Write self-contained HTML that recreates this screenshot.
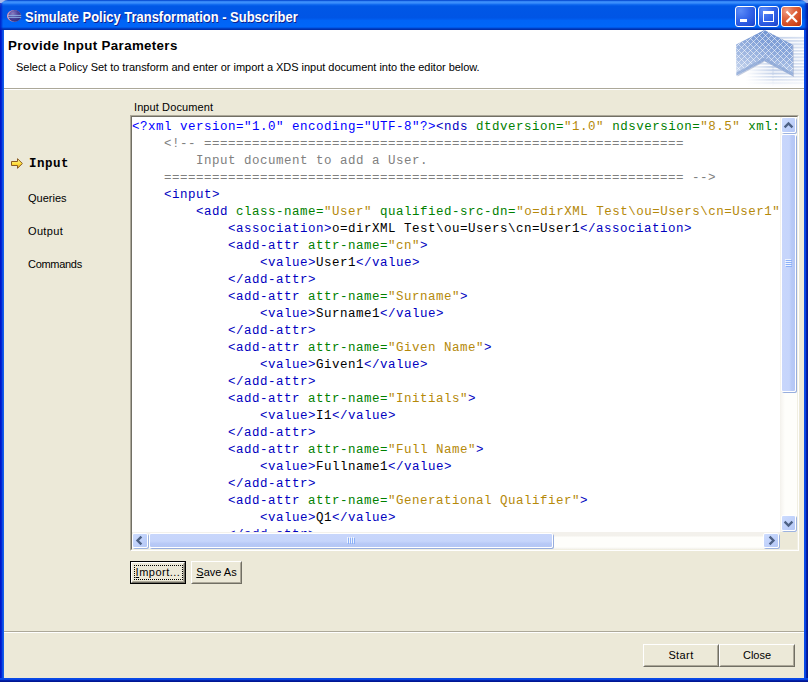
<!DOCTYPE html>
<html><head><meta charset="utf-8"><title>Simulate Policy Transformation - Subscriber</title>
<style>
*{box-sizing:border-box;margin:0;padding:0}
html,body{width:808px;height:682px;overflow:hidden;background:#ece9d8}
body{position:relative;font-family:"Liberation Sans",sans-serif;font-size:11px;color:#000}
.abs{position:absolute}
#corners{left:0;top:0;width:808px;height:8px;background:#a9b9ea}
#titlebar{left:0;top:0;width:808px;height:30px;border-radius:8px 8px 0 0;background:linear-gradient(to bottom,#0846cc 0,#1462e4 1px,#3a8cfa 1.6px,#3d90fc 3px,#1c74f4 4px,#0862ec 5px,#0057e6 6.5px,#0055e5 17.5px,#005aec 19px,#0064f6 20.5px,#0066f8 26.5px,#0058e8 27.5px,#0040c4 28.5px,#0030ac 29.5px,#002a9c 30px)}
#bl{left:0;top:30px;width:4px;height:652px;background:linear-gradient(to right,#0014c4 0,#0019cf 30%,#0a48e2 60%,#1464ee 100%)}
#br{left:804px;top:30px;width:4px;height:652px;background:linear-gradient(to right,#0a4ee8 0,#0842e2 45%,#001ca0 65%,#00138c 100%)}
#bb{left:0;top:678px;width:808px;height:4px;background:linear-gradient(to bottom,#0a4ee8 0,#0842e2 45%,#001ca0 65%,#00138c 100%)}
#title{left:25px;top:9px;font-weight:bold;font-size:14px;line-height:17px;color:#fff;text-shadow:1px 1px 0 #0f1f8c;white-space:nowrap;transform:scaleX(.925);transform-origin:0 0}
.tb{top:6px;width:21px;height:21px;border:1px solid #fff;border-radius:3px;background:radial-gradient(circle at 25% 20%,#5c8cf8 0,#3566ea 45%,#2450d8 80%,#1a3cc0 100%)}
.tb.close{background:radial-gradient(circle at 25% 20%,#f0a088 0,#e06844 35%,#d44a20 70%,#b83010 100%)}
#header{left:4px;top:30px;width:800px;height:58px;background:#fff}
#h1{left:8px;top:38px;font-weight:bold;font-size:13.33px;line-height:15px;white-space:nowrap;letter-spacing:.34px}
#h2{left:16px;top:60px;font-size:11px;line-height:14px;white-space:nowrap;letter-spacing:-.03px}
.sep{left:4px;width:800px;height:2px;border-top:1px solid #aca899;border-bottom:1px solid #fff}
.lbl{font-size:11px;line-height:14px;white-space:nowrap}
#editor{left:130px;top:115px;width:669px;height:436px;border:1px solid;border-color:#aca899 #fff #fff #aca899;background:#fff}
#editor2{left:0;top:0;width:667px;height:434px;border:1px solid;border-color:#716f64 #f1efe2 #f1efe2 #716f64;background:#fff;overflow:hidden}
#code{left:0;top:0;width:648px;height:415px;overflow:hidden;font-family:"Liberation Mono",monospace;font-size:12.5px;letter-spacing:.5px;line-height:17px;white-space:pre;padding:2px 0 0 0}
.p{color:#0000ff}.t{color:#0000c0}.a{color:#008000}.v{color:#b5890a}.c{color:#808080}
.btn{border:1px solid;border-color:#fff #716f64 #716f64 #fff;background:#ece9d8;text-align:center;font-size:11px;white-space:nowrap}
.btn>div{border:1px solid;border-color:#ece9d8 #aca899 #aca899 #ece9d8;width:100%;height:100%;line-height:18px}
u{text-decoration:underline}

.sbtn{border:1px solid #fff;border-radius:2px;background:linear-gradient(135deg,#cddcfe 0%,#c2d3fb 45%,#b4c7f5 100%);box-shadow:1px 1px 0 #9db3df}
.thumb{border:1px solid #fff;border-radius:2px;box-shadow:1px 1px 0 #98aedd}
#vtrack{left:648px;top:0;width:17px;height:415px;background:linear-gradient(to right,#f3f1ec 0,#f8f7f3 2px,#fefefb 5px,#fefefb 100%)}
#htrack{left:0;top:415px;width:648px;height:17px;background:linear-gradient(to bottom,#f3f1ec 0,#f3f1ec 4px,#fefefb 5px,#fefefb 15px,#f3f1ec 17px)}
#corner{left:648px;top:415px;width:17px;height:17px;background:#ece9d8}
</style></head><body>
<div class="abs" id="corners"></div>
<div class="abs" id="titlebar"></div>
<div class="abs" style="left:0;top:3px;width:3px;height:27px;background:linear-gradient(to right,rgba(0,20,190,.85),rgba(0,30,200,.5) 60%,rgba(0,40,210,0))"></div><div class="abs" style="left:804px;top:3px;width:4px;height:27px;background:linear-gradient(to right,rgba(0,30,190,0),rgba(0,24,170,.6) 50%,rgba(0,16,140,.9))"></div><div class="abs" id="bl"></div><div class="abs" id="br"></div><div class="abs" id="bb"></div>
<div class="abs" id="title">Simulate Policy Transformation - Subscriber</div>
<div class="abs tb" style="left:735px"></div>
<div class="abs tb" style="left:758px"></div>
<div class="abs tb close" style="left:781px"></div>
<div class="abs" id="header"></div>

<svg class="abs" style="left:0;top:0" width="808" height="90" viewBox="0 0 808 90">
 <defs>
  <radialGradient id="ecl" cx="0.35" cy="0.3" r="0.8"><stop offset="0" stop-color="#8a7cc0"/><stop offset="0.5" stop-color="#4a429a"/><stop offset="1" stop-color="#2a2a78"/></radialGradient>
  <linearGradient id="chv" x1="0" y1="0" x2="0" y2="1"><stop offset="0" stop-color="#7496d2"/><stop offset="0.6" stop-color="#8eaadc"/><stop offset="1" stop-color="#b4c8e8"/></linearGradient>
  <pattern id="hatch" width="6" height="6" patternUnits="userSpaceOnUse" x="1" y="3"><path d="M-1,-1L7,7M6,-1L-1,6M12,-1L5,6" stroke="#fff" stroke-opacity=".55" stroke-width="1"/></pattern>
  <pattern id="stripes" width="10" height="3.25" patternUnits="userSpaceOnUse" x="0" y="36.8"><rect x="0" y="0" width="10" height="2" fill="#c2d0e9"/></pattern>
  <linearGradient id="fadeL" x1="0" y1="0" x2="1" y2="0"><stop offset="0" stop-color="#fff" stop-opacity="1"/><stop offset="1" stop-color="#fff" stop-opacity="0"/></linearGradient>
  <linearGradient id="fadeR" x1="0" y1="0" x2="1" y2="0"><stop offset="0" stop-color="#fff" stop-opacity="0"/><stop offset="1" stop-color="#fff" stop-opacity=".4"/></linearGradient>
  <linearGradient id="chl" x1="1" y1="0" x2="0" y2="1"><stop offset="0.35" stop-color="#fff" stop-opacity="0"/><stop offset="1" stop-color="#fff" stop-opacity=".38"/></linearGradient>
  <linearGradient id="fadeB" x1="0" y1="0" x2="0" y2="1"><stop offset="0" stop-color="#fff" stop-opacity="0"/><stop offset="1" stop-color="#fff" stop-opacity="1"/></linearGradient>
 </defs>
 <!-- eclipse icon -->
 <ellipse cx="14" cy="15.9" rx="7" ry="5.9" fill="#e8a0b8"/>
 <ellipse cx="14.7" cy="15.9" rx="6.4" ry="5.9" fill="url(#ecl)"/>
 <rect x="8" y="14.9" width="13.2" height=".9" fill="#8fb6e6"/>
 <rect x="8" y="16.9" width="13.2" height=".9" fill="#8fb6e6"/>
 <!-- min / max / close glyphs -->
 <rect x="740" y="19" width="7" height="3" fill="#fff"/>
 <path d="M763,11h11v11h-11z M764,14v7h9v-7z" fill="#fff" fill-rule="evenodd"/>
 <path d="M786.5,11.5L797,22M797,11.5L786.5,22" stroke="#fff" stroke-width="2.2" fill="none"/>
 <!-- header graphic -->
 <g>
  <rect x="772" y="36" width="32" height="51" fill="url(#stripes)"/>
  <rect x="746" y="62" width="28" height="25" fill="url(#stripes)"/>
  <rect x="746" y="62" width="28" height="25" fill="url(#fadeL)"/>
  <rect x="746" y="75" width="58" height="12" fill="url(#fadeB)"/>
  <rect x="772" y="36" width="32" height="51" fill="url(#fadeR)"/>
  <polygon points="764.3,30 793.6,45 794,77 764.8,61.6 737.5,76.5 737,45" fill="#8c9cc0" opacity=".5"/>
  <polygon points="764.3,30 792.6,44.8 793,76 764.3,60.8 736.5,75.6 736.2,44.4" fill="url(#chv)"/>
  <polygon points="764.3,30 792.6,44.8 793,76 764.3,60.8 736.5,75.6 736.2,44.4" fill="url(#hatch)"/>
  <polygon points="764.3,30 792.6,44.8 793,76 764.3,60.8 736.5,75.6 736.2,44.4" fill="url(#chl)"/>
  <polygon points="736.4,72.4 764.3,57.6 793,72.8 793,76 764.3,60.8 736.5,75.6" fill="#8ba6d4" opacity=".75"/>
 </g>
</svg>
<svg class="abs" style="left:10px;top:157px" width="14" height="13" viewBox="0 0 14 13">
 <defs><linearGradient id="arw" x1="0" y1="0" x2="0" y2="1"><stop offset="0" stop-color="#fff8b0"/><stop offset=".5" stop-color="#ffe040"/><stop offset="1" stop-color="#e8a818"/></linearGradient></defs>
 <path d="M1.5,4.5H7.5V1.7L12.4,6.5L7.5,11.3V8.5H1.5Z" fill="url(#arw)" stroke="#8a5a20" stroke-width="1" stroke-linejoin="round"/>
</svg>
<div class="abs" id="h1">Provide Input Parameters</div>
<div class="abs" id="h2">Select a Policy Set to transform and enter or import a XDS input document into the editor below.</div>
<div class="abs sep" style="top:88px"></div>
<div class="abs lbl" id="l_doc" style="left:134px;top:100px;letter-spacing:.1px">Input Document</div>
<div class="abs lbl" id="l_input" style="left:29px;top:157px;font-family:'Liberation Mono',monospace;font-weight:bold;font-size:12.5px;letter-spacing:.5px">Input</div>
<div class="abs lbl" id="l_q" style="left:28px;top:191px">Queries</div>
<div class="abs lbl" id="l_o" style="left:28px;top:224px;letter-spacing:.35px">Output</div>
<div class="abs lbl" id="l_c" style="left:28px;top:257px;letter-spacing:-.3px">Commands</div>
<div class="abs" id="editor"><div class="abs" id="editor2">
<div class="abs" id="code"><span class="p">&lt;?xml version="1.0" encoding="UTF-8"?&gt;</span><span class="t">&lt;nds</span> <span class="a">dtdversion=</span><span class="v">"1.0"</span> <span class="a">ndsversion=</span><span class="v">"8.5"</span> <span class="a">xml:lang=</span><span class="v">"en"</span><span class="t">&gt;</span>
<span class="c">    &lt;!-- ============================================================</span>
<span class="c">        Input document to add a User.</span>
<span class="c">    ================================================================= --&gt;</span>
    <span class="t">&lt;input&gt;</span>
        <span class="t">&lt;add</span> <span class="a">class-name=</span><span class="v">"User"</span> <span class="a">qualified-src-dn=</span><span class="v">"o=dirXML Test\ou=Users\cn=User1"</span> <span class="a">src-dn=</span>
            <span class="t">&lt;association&gt;</span>o=dirXML Test\ou=Users\cn=User1<span class="t">&lt;/association&gt;</span>
            <span class="t">&lt;add-attr</span> <span class="a">attr-name=</span><span class="v">"cn"</span><span class="t">&gt;</span>
                <span class="t">&lt;value&gt;</span>User1<span class="t">&lt;/value&gt;</span>
            <span class="t">&lt;/add-attr&gt;</span>
            <span class="t">&lt;add-attr</span> <span class="a">attr-name=</span><span class="v">"Surname"</span><span class="t">&gt;</span>
                <span class="t">&lt;value&gt;</span>Surname1<span class="t">&lt;/value&gt;</span>
            <span class="t">&lt;/add-attr&gt;</span>
            <span class="t">&lt;add-attr</span> <span class="a">attr-name=</span><span class="v">"Given Name"</span><span class="t">&gt;</span>
                <span class="t">&lt;value&gt;</span>Given1<span class="t">&lt;/value&gt;</span>
            <span class="t">&lt;/add-attr&gt;</span>
            <span class="t">&lt;add-attr</span> <span class="a">attr-name=</span><span class="v">"Initials"</span><span class="t">&gt;</span>
                <span class="t">&lt;value&gt;</span>I1<span class="t">&lt;/value&gt;</span>
            <span class="t">&lt;/add-attr&gt;</span>
            <span class="t">&lt;add-attr</span> <span class="a">attr-name=</span><span class="v">"Full Name"</span><span class="t">&gt;</span>
                <span class="t">&lt;value&gt;</span>Fullname1<span class="t">&lt;/value&gt;</span>
            <span class="t">&lt;/add-attr&gt;</span>
            <span class="t">&lt;add-attr</span> <span class="a">attr-name=</span><span class="v">"Generational Qualifier"</span><span class="t">&gt;</span>
                <span class="t">&lt;value&gt;</span>Q1<span class="t">&lt;/value&gt;</span>
            <span class="t">&lt;/add-attr&gt;</span></div>
<div class="abs" id="vtrack">
 <div class="abs sbtn" style="left:1px;top:0;width:15px;height:16px"></div>
 <div class="abs thumb" style="left:1px;top:17px;width:15px;height:258px;background:linear-gradient(to right,#c8d6fb 0,#c6d5fb 55%,#b7c9f6 75%,#b5c7f5 100%)"></div>
 <div class="abs sbtn" style="left:1px;top:398px;width:15px;height:16px"></div>
 <svg class="abs" style="left:0;top:0" width="17" height="415" viewBox="0 0 17 415">
  <path d="M4.6,10.4 L8.5,6.5 L12.4,10.4" fill="none" stroke="#4d6185" stroke-width="2.3"/>
  <path d="M4.6,404.6 L8.5,408.5 L12.4,404.6" fill="none" stroke="#4d6185" stroke-width="2.3"/>
  <g shape-rendering="crispEdges"><path d="M5,142h6M5,144h6M5,146h6M5,148h6" stroke="#eef4fe" stroke-width="1"/><path d="M6,143h6M6,145h6M6,147h6M6,149h6" stroke="#8cb0f8" stroke-width="1"/></g>
 </svg>
</div>
<div class="abs" id="htrack">
 <div class="abs sbtn" style="left:0;top:1px;width:16px;height:15px"></div>
 <div class="abs thumb" style="left:17px;top:1px;width:404px;height:15px;background:linear-gradient(to bottom,#c8d6fb 0,#c6d5fb 55%,#b7c9f6 75%,#b5c7f5 100%)"></div>
 <div class="abs sbtn" style="left:631px;top:1px;width:16px;height:15px"></div>
 <svg class="abs" style="left:0;top:0" width="648" height="17" viewBox="0 0 648 17">
  <path d="M9.4,4.6 L5.5,8.5 L9.4,12.4" fill="none" stroke="#4d6185" stroke-width="2.3"/>
  <path d="M637.6,4.6 L641.5,8.5 L637.6,12.4" fill="none" stroke="#4d6185" stroke-width="2.3"/>
  <g shape-rendering="crispEdges"><path d="M215.5,5v6M217.5,5v6M219.5,5v6M221.5,5v6" stroke="#eef4fe" stroke-width="1"/><path d="M216.5,6v6M218.5,6v6M220.5,6v6M222.5,6v6" stroke="#8cb0f8" stroke-width="1"/></g>
 </svg>
</div>
<div class="abs" id="corner"></div>
</div></div>
<div class="abs" style="left:130px;top:561px;width:56px;height:23px;border:1px solid #000"><div class="btn" style="width:54px;height:21px"><div id="b_imp" style="line-height:17px;letter-spacing:.5px"><u>I</u>mport...</div></div></div>
<div class="abs" style="left:134px;top:565px;width:49px;height:15px;border:1px dotted #000"></div>
<div class="abs btn" style="left:191px;top:561px;width:51px;height:23px;"><div id="b_save"><u>S</u>ave As</div></div>
<div class="abs sep" style="top:631px"></div>
<div class="abs btn" style="left:643px;top:644px;width:76px;height:23px;"><div id="b_start" style="letter-spacing:.4px">Start</div></div>
<div class="abs btn" style="left:719px;top:644px;width:76px;height:23px;"><div id="b_close">Close</div></div>
</body></html>
